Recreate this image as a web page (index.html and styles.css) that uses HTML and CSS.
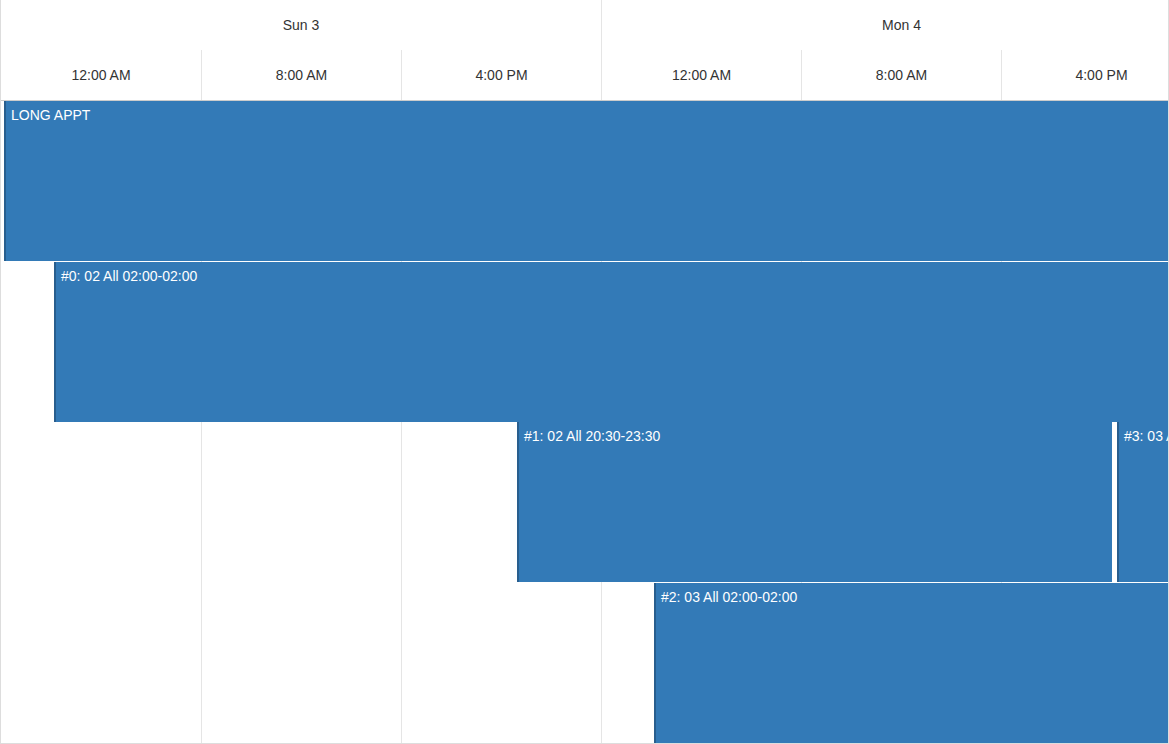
FILE: index.html
```html
<!DOCTYPE html>
<html>
<head>
    <meta name="viewport" content="width=device-width, initial-scale=1.0">
    <link rel="stylesheet" href="styles.css">
</head>
<body>
    <div class="scheduler">
        <div class="track">
            <div class="header">
                <div class="days">
                    <div class="day">Sun 3</div>
                    <div class="day">Mon 4</div>
                </div>
                <div class="slots">
                    <div class="slot">12:00 AM</div>
                    <div class="slot">8:00 AM</div>
                    <div class="slot">4:00 PM</div>
                    <div class="slot">12:00 AM</div>
                    <div class="slot">8:00 AM</div>
                    <div class="slot">4:00 PM</div>
                </div>
            </div>
            <div class="content">
                <div class="columns">
                    <div class="column"></div>
                    <div class="column"></div>
                    <div class="column"></div>
                    <div class="column"></div>
                    <div class="column"></div>
                    <div class="column"></div>
                </div>
                <div class="event" style="top: 0; left: 3px; width: 1300px;">LONG APPT</div>
                <div class="event" style="top: 161px; left: 53px; width: 1250px;">#0: 02 All 02:00-02:00</div>
                <div class="event" style="top: 321px; left: 516px; width: 595px;">#1: 02 All 20:30-23:30</div>
                <div class="event" style="top: 321px; left: 1116px; width: 600px;">#3: 03 All 02:00-02:00</div>
                <div class="event" style="top: 482px; left: 653px; width: 700px;">#2: 03 All 02:00-02:00</div>
            </div>
        </div>
    </div>
</body>
</html>
```

FILE: styles.css
```css
body {
    margin: 0;
    font-family: "Liberation Sans", Arial, sans-serif;
    font-size: 14px;
    color: #333;
    background: #fff;
}

.scheduler {
    width: 1169px;
    height: 744px;
    box-sizing: border-box;
    border: 1px solid #ddd;
    border-top: none;
    overflow: hidden;
}

.track {
    width: 1200px;
}

.header {
    border-bottom: 1px solid #ccc;
}

.days,
.slots,
.columns {
    display: flex;
}

.day {
    width: 600px;
    height: 50px;
    line-height: 50px;
    text-align: center;
    box-sizing: border-box;
}

.day + .day {
    border-left: 1px solid #e5e5e5;
}

.slot,
.column {
    width: 200px;
    flex: none;
    box-sizing: border-box;
}

.slot {
    height: 50px;
    line-height: 50px;
    text-align: center;
}

.slot + .slot,
.column + .column {
    border-left: 1px solid #e5e5e5;
}

.content {
    position: relative;
    height: 642px;
}

.columns {
    height: 100%;
}

.event {
    position: absolute;
    height: 160px;
    box-sizing: border-box;
    padding: 4px 5px;
    line-height: 20px;
    background-color: #337ab7;
    border-left: 2px solid #285e8e;
    color: #fff;
    white-space: nowrap;
    overflow: hidden;
}
```
